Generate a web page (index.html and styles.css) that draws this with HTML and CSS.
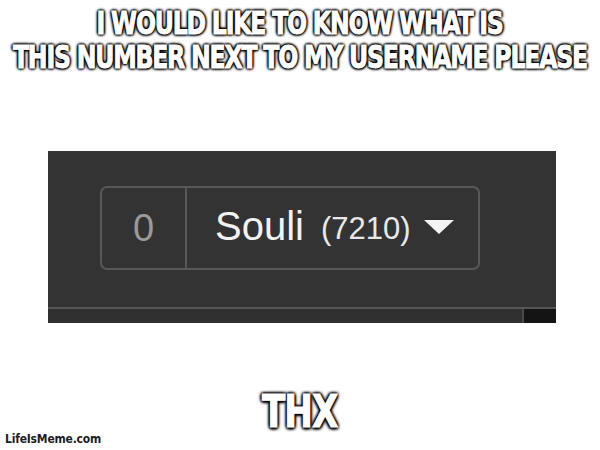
FILE: index.html
```html
<!DOCTYPE html>
<html lang="en">
<head>
<meta charset="utf-8">
<title>Meme</title>
<link rel="stylesheet" href="styles.css">
</head>
<body>
<main class="meme">
  <h1 class="caption caption-top">
    <span class="line">I WOULD LIKE TO KNOW WHAT IS</span>
    <span class="line">THIS NUMBER NEXT TO MY USERNAME PLEASE</span>
  </h1>
  <section class="panel">
    <div class="panel-top">
      <div class="userbtn">
        <span class="count">0</span>
        <span class="user">
          <span class="name">Souli</span>
          <span class="rep">(7210)</span>
          <svg class="caret" width="30" height="14" viewBox="0 0 30 14"><path d="M0 0 H30 L15 14 Z" fill="#f4f4f4"/></svg>
        </span>
      </div>
    </div>
    <div class="panel-rule"></div>
    <div class="panel-bottom">
      <div class="strip"></div>
      <div class="vline"></div>
      <div class="dark"></div>
    </div>
  </section>
  <p class="caption caption-bottom"><span class="line">THX</span></p>
  <footer class="watermark">LifeIsMeme.com</footer>
</main>
</body>
</html>
```
FILE: styles.css
```css
html, body {
  margin: 0;
  padding: 0;
  background: #ffffff;
}
.meme {
  width: 600px;
  height: 450px;
  display: flex;
  flex-direction: column;
  align-items: center;
  position: relative;
  overflow: hidden;
}
.caption {
  margin: 0;
  color: #ffffff;
  font-family: Impact, "DejaVu Sans Condensed", "DejaVu Sans", sans-serif;
  font-weight: bold;
  text-align: center;
  -webkit-text-stroke: 0.9px #ffffff;
  text-shadow: 0 0 2px #000, 0 0 2px #000, 0 0 3px #000, 0 0 4px #000, 1px 1px 3px #000, -1px -1px 3px #000, 1px -1px 3px #000, -1px 1px 3px #000;
  display: flex;
  flex-direction: column;
  align-items: center;
}
.line {
  display: block;
  white-space: nowrap;
}
.caption-top {
  font-size: 32px;
  line-height: 34px;
  letter-spacing: -1.5px;
  padding-top: 6px;
}
.caption-top .line {
  transform: scaleX(0.82);
}
.panel {
  align-self: flex-start;
  margin: 77px 0 0 48px;
  width: 508px;
  height: 172px;
  background: #333333;
  display: flex;
  flex-direction: column;
}
.panel-top {
  flex: 1;
  padding: 35px 0 0 52px;
}
.userbtn {
  display: inline-flex;
  height: 84px;
  box-sizing: border-box;
  border: 2px solid #585858;
  border-radius: 7px;
  font-family: "Liberation Sans", Arial, sans-serif;
}
.count {
  width: 83px;
  border-right: 2px solid #585858;
  display: flex;
  align-items: center;
  justify-content: center;
  color: #9a9a9a;
  font-size: 38px;
}
.user {
  display: flex;
  align-items: center;
  padding: 0 24px 0 28px;
}
.name {
  color: #f2f2f2;
  font-size: 40px;
  margin-top: -4px;
}
.rep {
  color: #e8e8e8;
  font-size: 31px;
  margin-left: 17px;
  margin-top: 2px;
}
.caret {
  margin-left: 13px;
  margin-top: -2px;
}
.panel-rule {
  height: 2px;
  background: #555555;
}
.panel-bottom {
  height: 14px;
  display: flex;
}
.strip {
  flex: 1;
  background: #303030;
}
.vline {
  width: 2px;
  background: #4a4a4a;
}
.dark {
  width: 32px;
  background: #141414;
}
.caption-bottom {
  margin-top: 69px;
  font-size: 40px;
  line-height: 40px;
  letter-spacing: -1px;
}
.caption-bottom .line {
  transform: scale(0.95, 1.1);
}
.watermark {
  position: absolute;
  left: 5px;
  bottom: 4px;
  font-family: "DejaVu Sans Condensed", "DejaVu Sans", sans-serif;
  font-weight: bold;
  font-size: 12px;
  color: #1e1e1e;
  letter-spacing: -0.2px;
}
```
